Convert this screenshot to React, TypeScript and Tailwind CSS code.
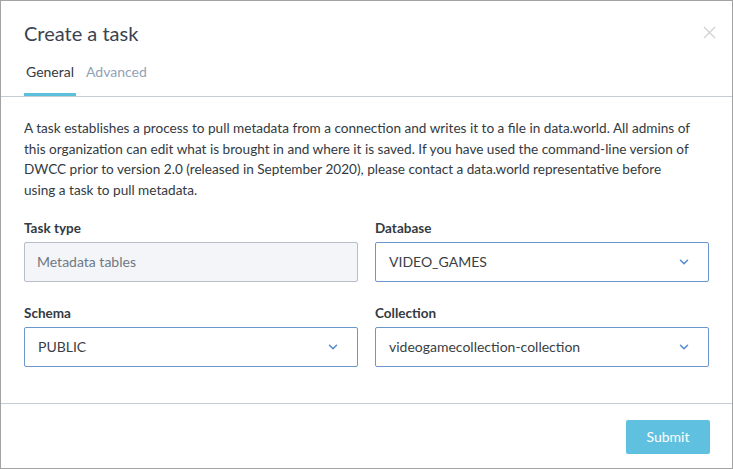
import { ChevronDown, X } from 'lucide-react';

const Select = ({ value }: { value: string }) => (
  <div className="flex h-[40px] items-center justify-between rounded-[2px] border border-[#6b97cc] bg-white pl-[13px] pr-[17px] text-[14px] text-[#3a3f45]">
    <span>{value}</span>
    <ChevronDown className="h-[14px] w-[14px] text-[#5a8fcf]" strokeWidth={2.75} />
  </div>
);

const Field = ({ label, children }: { label: string; children: React.ReactNode }) => (
  <div className="flex flex-col">
    <label className="mb-[4px] text-[13.5px] font-bold leading-[20px] text-[#333a42]">{label}</label>
    {children}
  </div>
);

export default function App() {
  return (
    <div
      className="h-[469px] w-[733px] overflow-hidden border border-[#a3a3a3] bg-white"
      style={{ fontFamily: 'Lato, "Open Sans", sans-serif' }}
    >
      <div className="relative px-[23px] pt-[19px]">
        <h1 className="text-[20px] leading-[26px] text-[#3b4350]">Create a task</h1>
        <button className="absolute right-[12px] top-[21px] text-[#cfcfcf]">
          <X className="h-[21px] w-[21px]" strokeWidth={1.3} />
        </button>
        <div className="mt-[15px] flex gap-[8px] text-[14px]">
          <div className="border-b-[3px] border-[#5bc0de] px-[2px] pb-[11px] text-[#333a42]">General</div>
          <div className="px-[2px] pb-[11px] text-[#8fa2b7]">Advanced</div>
        </div>
      </div>
      <div className="border-t border-[#c6ccd3]" />
      <div className="px-[23px] pt-[21px]">
        <p className="text-[13.6px] leading-[20.7px] text-[#333a42]">
          A task establishes a process to pull metadata from a connection and writes it to a file in data.world. All admins of
          <br />
          this organization can edit what is brought in and where it is saved. If you have used the command-line version of
          <br />
          DWCC prior to version 2.0 (released in September 2020), please contact a data.world representative before
          <br />
          using a task to pull metadata.
        </p>
        <div className="mt-[17px] grid grid-cols-2 gap-x-[17px] gap-y-[21px]">
          <Field label="Task type">
            <div className="flex h-[40px] items-center rounded-[2px] border border-[#b6bec7] bg-[#f3f5f8] pl-[12px] text-[14px] text-[#6f7883]">
              Metadata tables
            </div>
          </Field>
          <Field label="Database">
            <Select value="VIDEO_GAMES" />
          </Field>
          <Field label="Schema">
            <Select value="PUBLIC" />
          </Field>
          <Field label="Collection">
            <Select value="videogamecollection-collection" />
          </Field>
        </div>
      </div>
      <div className="mt-[36px] border-t border-[#c6ccd3]" />
      <div className="flex justify-end px-[22px] pt-[16px]">
        <button className="h-[34px] w-[84px] rounded-[2px] bg-[#5fc1df] text-[14px] text-white">Submit</button>
      </div>
    </div>
  );
}
